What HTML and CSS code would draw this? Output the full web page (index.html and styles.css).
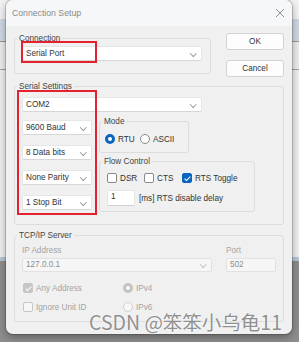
FILE: index.html
```html
<!DOCTYPE html>
<html lang="en">
<head>
    <meta charset="UTF-8">
    <title>Connection Setup</title>
    <link rel="stylesheet" href="styles.css">
</head>
<body>
    <div class="dialog">
        <div class="titlebar">
            <span class="title">Connection Setup</span>
            <svg class="close" width="10" height="10" viewBox="0 0 10 10"><path d="M1 1L9 9M9 1L1 9" stroke="#8c8c8c" stroke-width="1"/></svg>
        </div>
        <div class="dialog-body">
            <div class="top-row">
                <div class="group conn-group">
                    <div class="group-title">Connection</div>
                    <div class="combo wide first">Serial Port<i class="chev"></i></div>
                </div>
                <div class="buttons">
                    <button>OK</button>
                    <button>Cancel</button>
                </div>
            </div>

            <div class="group serial-group">
                <div class="group-title">Serial Settings</div>
                <div class="combo wide com">COM2<i class="chev"></i></div>
                <div class="serial-row">
                    <div class="serial-col">
                        <div class="combo">9600 Baud<i class="chev"></i></div>
                        <div class="combo">8 Data bits<i class="chev"></i></div>
                        <div class="combo">None Parity<i class="chev"></i></div>
                        <div class="combo">1 Stop Bit<i class="chev"></i></div>
                    </div>
                    <div class="side-col">
                        <div class="group mode-group">
                            <div class="group-title">Mode</div>
                            <div class="opts">
                                <label class="opt rtu"><span class="radio on"></span>RTU</label>
                                <label class="opt"><span class="radio"></span>ASCII</label>
                            </div>
                        </div>
                        <div class="group flow-group">
                            <div class="group-title">Flow Control</div>
                            <div class="opts">
                                <label class="opt dsr"><span class="check"></span>DSR</label>
                                <label class="opt cts"><span class="check"></span>CTS</label>
                                <label class="opt"><span class="check on"></span>RTS Toggle</label>
                            </div>
                            <div class="delay-row">
                                <div class="num">1</div>
                                <span>[ms] RTS disable delay</span>
                            </div>
                        </div>
                    </div>
                </div>
            </div>

            <div class="group tcp-group">
                <div class="group-title">TCP/IP Server</div>
                <div class="tcp-grid">
                    <div class="muted">IP Address</div>
                    <div class="muted">Port</div>
                    <div class="combo off">127.0.0.1<i class="chev"></i></div>
                    <div class="combo off">502</div>
                </div>
                <div class="tcp-opts">
                    <label class="opt muted"><span class="check dis on"></span>Any Address</label>
                    <label class="opt muted"><span class="radio dis on"></span>IPv4</label>
                    <label class="opt muted"><span class="check dis"></span>Ignore Unit ID</label>
                    <label class="opt muted"><span class="radio dis"></span>IPv6</label>
                </div>
            </div>
        </div>
    </div>

    <div class="mark mark-conn"></div>
    <div class="mark mark-serial"></div>
    <div class="watermark">CSDN @笨笨小乌龟11</div>
</body>
</html>
```

FILE: styles.css
```css
body {
    margin: 0;
    width: 299px;
    height: 342px;
    overflow: hidden;
    position: relative;
    font-family: "Liberation Sans", Arial, sans-serif;
    font-size: 8.2px;
    color: #333;
    background: linear-gradient(to bottom,
        #f2f2f2 0, #f2f2f2 19px,
        #cfd8e2 19px, #cfd8e2 41px,
        #9a9a9a 41px, #9a9a9a 42px,
        #ececec 42px, #ececec 69px,
        #a0a0a0 69px, #a0a0a0 70px,
        #f0f0f0 70px, #f0f0f0 257px,
        #b7c6d6 257px, #b7c6d6 261px,
        #8e8e8e 261px);
}
.dialog {
    margin-left: 6px;
    width: 286px;
    height: 334px;
    background: #f0f0f0;
    border-radius: 7px;
    overflow: hidden;
    box-shadow: 0 0 0 1px rgba(0, 0, 0, 0.16), 0 3px 8px rgba(0, 0, 0, 0.35);
}
.titlebar {
    height: 26px;
    display: flex;
    align-items: center;
    justify-content: space-between;
    padding: 0 7px 0 6px;
    background: #f6f7f9;
}
.title {
    font-size: 8.7px;
    color: #8a8a8a;
}
.dialog-body {
    padding: 7px 8px 0 8px;
}

/* group boxes */
.group {
    --pl: 7px;
    border: 1px solid #dcdcdc;
    border-radius: 3px;
    padding-left: var(--pl);
}
.group-title {
    display: table;
    height: 11px;
    line-height: 11px;
    margin: -6px 0 0 calc(2px - var(--pl));
    padding: 0 2px;
    background: #f0f0f0;
    color: #444;
}

.top-row {
    display: grid;
    grid-template-columns: 197px 58px;
    column-gap: 15px;
    align-items: start;
}
.conn-group {
    margin-top: 5px;
    padding-right: 8px;
    padding-bottom: 12px;
}
.buttons {
    display: flex;
    flex-direction: column;
    gap: 10px;
}
.buttons button {
    height: 17px;
    padding: 0;
    background: #fdfdfd;
    border: 1px solid #d3d3d3;
    border-radius: 3px;
    font-family: inherit;
    font-size: 8.2px;
    color: #333;
}

/* combos and inputs */
.combo {
    position: relative;
    box-sizing: border-box;
    width: 70px;
    height: 15px;
    line-height: 13px;
    padding-left: 3px;
    background: #fff;
    border: 1px solid #e6e6e6;
    border-bottom-color: #d6d6d6;
    border-radius: 2px;
    white-space: nowrap;
}
.combo.wide {
    width: 180px;
}
.combo.first {
    margin-top: 2px;
}
.chev {
    position: absolute;
    right: 6px;
    top: 4px;
    width: 3.5px;
    height: 3.5px;
    border-right: 1px solid #999;
    border-bottom: 1px solid #999;
    transform: rotate(45deg);
}
.combo.off {
    width: auto;
    height: 14px;
    line-height: 12px;
    background: #f6f6f6;
    border-color: #e2e2e2;
    color: #8f8f8f;
}
.combo.off .chev {
    border-color: #c0c0c0;
    top: 3px;
}

.serial-group {
    margin-top: 9px;
    padding-right: 8px;
    padding-bottom: 12px;
}
.com {
    margin-top: 5px;
}
.serial-row {
    display: flex;
    gap: 7px;
    margin-top: 8px;
}
.serial-col {
    display: flex;
    flex-direction: column;
    gap: 10px;
}
.side-col {
    margin-top: 1px;
}
.mode-group {
    --pl: 5px;
    width: 83px;
    padding-bottom: 8px;
}
.mode-group .opts {
    margin-top: 7px;
}
.flow-group {
    width: 147px;
    margin-top: 8px;
    padding-bottom: 5px;
}
.flow-group .opts {
    margin-top: 6px;
}

/* radios and checkboxes */
.opts {
    display: flex;
    height: 10px;
}
.opt {
    display: flex;
    align-items: center;
    height: 10px;
    white-space: nowrap;
}
.rtu {
    width: 35px;
}
.dsr {
    width: 37px;
}
.cts {
    width: 38px;
}
.radio, .check {
    box-sizing: border-box;
    width: 10px;
    height: 10px;
    margin-right: 3px;
    background: #fff;
    border: 1px solid #8a8a8a;
    flex: none;
}
.radio {
    border-radius: 50%;
}
.radio.on {
    border: 3px solid #0a64c2;
}
.check {
    border-radius: 2px;
    position: relative;
}
.check.on {
    background: #0a64c2;
    border-color: #0a64c2;
}
.check.on::after {
    content: "";
    position: absolute;
    left: 2.5px;
    top: 0.5px;
    width: 2px;
    height: 5px;
    border-right: 1px solid #fff;
    border-bottom: 1px solid #fff;
    transform: rotate(45deg);
}
.check.dis {
    border-color: #c8c8c8;
    background: #f7f7f7;
}
.check.dis.on {
    background: #c6c6c6;
    border-color: #c6c6c6;
}
.radio.dis {
    border-color: #cfcfcf;
    background: #f7f7f7;
}
.radio.dis.on {
    border: 3px solid #c2c2c2;
    background: #fff;
}

.delay-row {
    display: flex;
    align-items: center;
    gap: 4px;
    margin-top: 7px;
}
.num {
    box-sizing: border-box;
    width: 28px;
    height: 16px;
    padding: 1px 0 0 3px;
    background: #fff;
    border: 1px solid #e6e6e6;
    border-bottom-color: #d0d0d0;
    border-radius: 2px;
}

.tcp-group {
    margin-top: 10px;
    padding-right: 7px;
    padding-bottom: 9px;
}
.tcp-grid {
    display: grid;
    grid-template-columns: 190px 50px;
    grid-template-rows: 10px 14px;
    column-gap: 14px;
    row-gap: 2px;
    margin-top: 5px;
    line-height: 10px;
}
.tcp-opts {
    display: grid;
    grid-template-columns: 100px auto;
    row-gap: 9px;
    margin-top: 11px;
    padding-left: 1px;
}
.muted {
    color: #a4a4a4;
}

/* red highlight marks and watermark lie over the dialog */
.mark {
    position: absolute;
    box-sizing: border-box;
    border: 2px solid #e3212f;
}
.mark-conn {
    left: 21px;
    top: 41px;
    width: 76px;
    height: 22px;
}
.mark-serial {
    left: 17px;
    top: 90px;
    width: 80px;
    height: 125px;
}
.watermark {
    position: absolute;
    left: 89px;
    top: 311px;
    font-family: "Noto Sans CJK SC", sans-serif;
    font-size: 19.5px;
    line-height: 22px;
    color: #909090;
    text-shadow: 0 0 1px #fff, 0 0 2px #fff;
    white-space: nowrap;
}
```
